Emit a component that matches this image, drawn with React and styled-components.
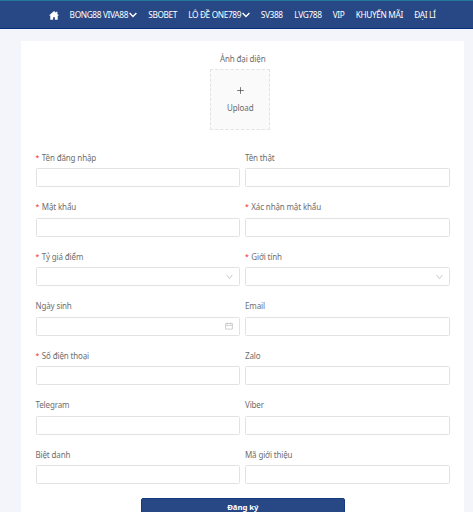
import React from "react";
import styled, { createGlobalStyle } from "styled-components";

const MENU = [
  { text: "BONG88 VIVA88", width: 67.5, arrow: true },
  { text: "SBOBET", width: 28 },
  { text: "LÔ ĐỀ ONE789", width: 61.5, arrow: true },
  { text: "SV388", width: 22.5 },
  { text: "LVG788", width: 27 },
  { text: "VIP", width: 12 },
  { text: "KHUYẾN MÃI", width: 47.5 },
  { text: "ĐẠI LÍ", width: 22 },
];

const FIELDS = [
  { label: "Tên đăng nhập", required: true },
  { label: "Tên thật" },
  { label: "Mật khẩu", required: true },
  { label: "Xác nhận mật khẩu", required: true },
  { label: "Tỷ giá điểm", required: true, icon: "down" },
  { label: "Giới tính", required: true, icon: "down" },
  { label: "Ngày sinh", icon: "date" },
  { label: "Email" },
  { label: "Số điện thoại", required: true },
  { label: "Zalo" },
  { label: "Telegram" },
  { label: "Viber" },
  { label: "Biệt danh" },
  { label: "Mã giới thiệu" },
];

const HomeIcon = () => (
  <svg width="10" height="9" viewBox="0 0 20 18" fill="#fff">
    <path d="M10 0 0 9h2.6v8.6h5.6v-5h3.6v5h5.6V9H20l-3.2-2.9V1.6h-2.6v2.1z" />
  </svg>
);

const ArrowIcon = () => (
  <svg width="8" height="6" viewBox="0 0 8 6" fill="none" stroke="#fff" strokeWidth="1.4">
    <path d="M0.6 1.1 4 4.5 7.4 1.1" />
  </svg>
);

const DownIcon = () => (
  <svg width="7" height="6" viewBox="0 0 7 6" fill="none" stroke="#bdbdbd" strokeWidth="0.8">
    <path d="M0.7 0.9 3.5 4.7 6.3 0.9" />
  </svg>
);

const DateIcon = () => (
  <svg width="8" height="8" viewBox="0 0 8 8" fill="none" stroke="#bdbdbd" strokeWidth="0.7">
    <path d="M0.6 1.5h6.8v5.6H0.6zM0.6 3.4h6.8M2.4 0.5v1.8M5.6 0.5v1.8" />
  </svg>
);

const PlusIcon = () => (
  <svg width="7" height="7" viewBox="0 0 7 7" fill="none" stroke="#555" strokeWidth="0.8">
    <path d="M3.5 0.2v6.6M0.2 3.5h6.6" />
  </svg>
);

const App = () => {
  return (
    <>
      <GlobalStyle />
      <Header>
        <HomeIcon />
        {MENU.map((item) => (
          <MenuItem key={item.text} $width={item.width}>
            {item.text}
            {item.arrow && <ArrowIcon />}
          </MenuItem>
        ))}
      </Header>
      <Card>
        <Avatar>
          <span>Ảnh đại diện</span>
          <UploadBox>
            <PlusIcon />
            <span>Upload</span>
          </UploadBox>
        </Avatar>
        <FieldGrid>
          {FIELDS.map((field) => (
            <Field key={field.label}>
              <Label>
                {field.required && <Star>*</Star>}
                {field.label}
              </Label>
              <Control>
                {field.icon === "down" && <DownIcon />}
                {field.icon === "date" && <DateIcon />}
              </Control>
            </Field>
          ))}
        </FieldGrid>
        <Submit>Đăng ký</Submit>
      </Card>
    </>
  );
};

const GlobalStyle = createGlobalStyle`
  * {
    box-sizing: border-box;
  }

  body {
    margin: 0;
    height: 512px;
    overflow: hidden;
    background: #f4f5fa;
    font-family: "Noto Sans", "Open Sans", sans-serif;
    font-size: 8px;
    letter-spacing: -0.14px;
    color: #6e6e6e;
  }

  svg {
    display: block;
    flex-shrink: 0;
  }
`;

const Header = styled.header`
  display: flex;
  align-items: center;
  gap: 11.1px;
  height: 29px;
  padding: 1px 0 0 48.5px;
  background: #284885;
  border-top: 1px solid #207a9c;
  border-bottom: 1px solid #06307f;
`;

const MenuItem = styled.a`
  display: flex;
  align-items: center;
  justify-content: space-between;
  flex: 0 0 ${(props) => props.$width}px;
  height: 12px;
  font-size: 8.3px;
  letter-spacing: -0.36px;
  line-height: 12px;
  white-space: nowrap;
  color: #fff;
`;

const Card = styled.main`
  display: flex;
  flex-direction: column;
  width: 443px;
  height: 480px;
  margin: 12px 0 0 21px;
  padding: 12px 14px 0 14.5px;
  background: #fff;
`;

const Avatar = styled.div`
  display: flex;
  flex-direction: column;
  align-items: center;
  height: 98.5px;
  line-height: 12px;
`;

const UploadBox = styled.button`
  display: flex;
  flex-direction: column;
  align-items: center;
  gap: 8px;
  width: 60px;
  height: 61px;
  margin: 4px 0 0 -5px;
  padding: 17px 0 0;
  background: #fafafa;
  border: 1px dashed #e2e2e2;
  border-radius: 1px;
  font: inherit;
  letter-spacing: -0.1px;
  line-height: 12px;
  color: #6a6a6a;
`;

const FieldGrid = styled.div`
  display: grid;
  grid-template-columns: 204.5px 204.5px;
  grid-auto-rows: 49.55px;
  column-gap: 5px;
`;

const Field = styled.div`
  display: flex;
  flex-direction: column;
`;

const Label = styled.label`
  display: flex;
  height: 16.5px;
  line-height: 12px;
  white-space: nowrap;
`;

const Star = styled.span`
  width: 6.3px;
  font-size: 6.8px;
  color: #f5222d;
`;

const Control = styled.div`
  display: flex;
  align-items: center;
  justify-content: flex-end;
  height: 19px;
  padding-right: 6px;
  border: 1px solid #e2e2e2;
  border-radius: 1.5px;
`;

const Submit = styled.button`
  display: flex;
  align-items: flex-start;
  align-self: center;
  justify-content: center;
  width: 204px;
  height: 20px;
  padding: 4px 0 0;
  background: #284885;
  border: 1px solid #153a80;
  border-radius: 2px;
  font: inherit;
  font-size: 7.8px;
  font-weight: 700;
  letter-spacing: -0.1px;
  line-height: 9px;
  color: #fff;
`;

export default App;
